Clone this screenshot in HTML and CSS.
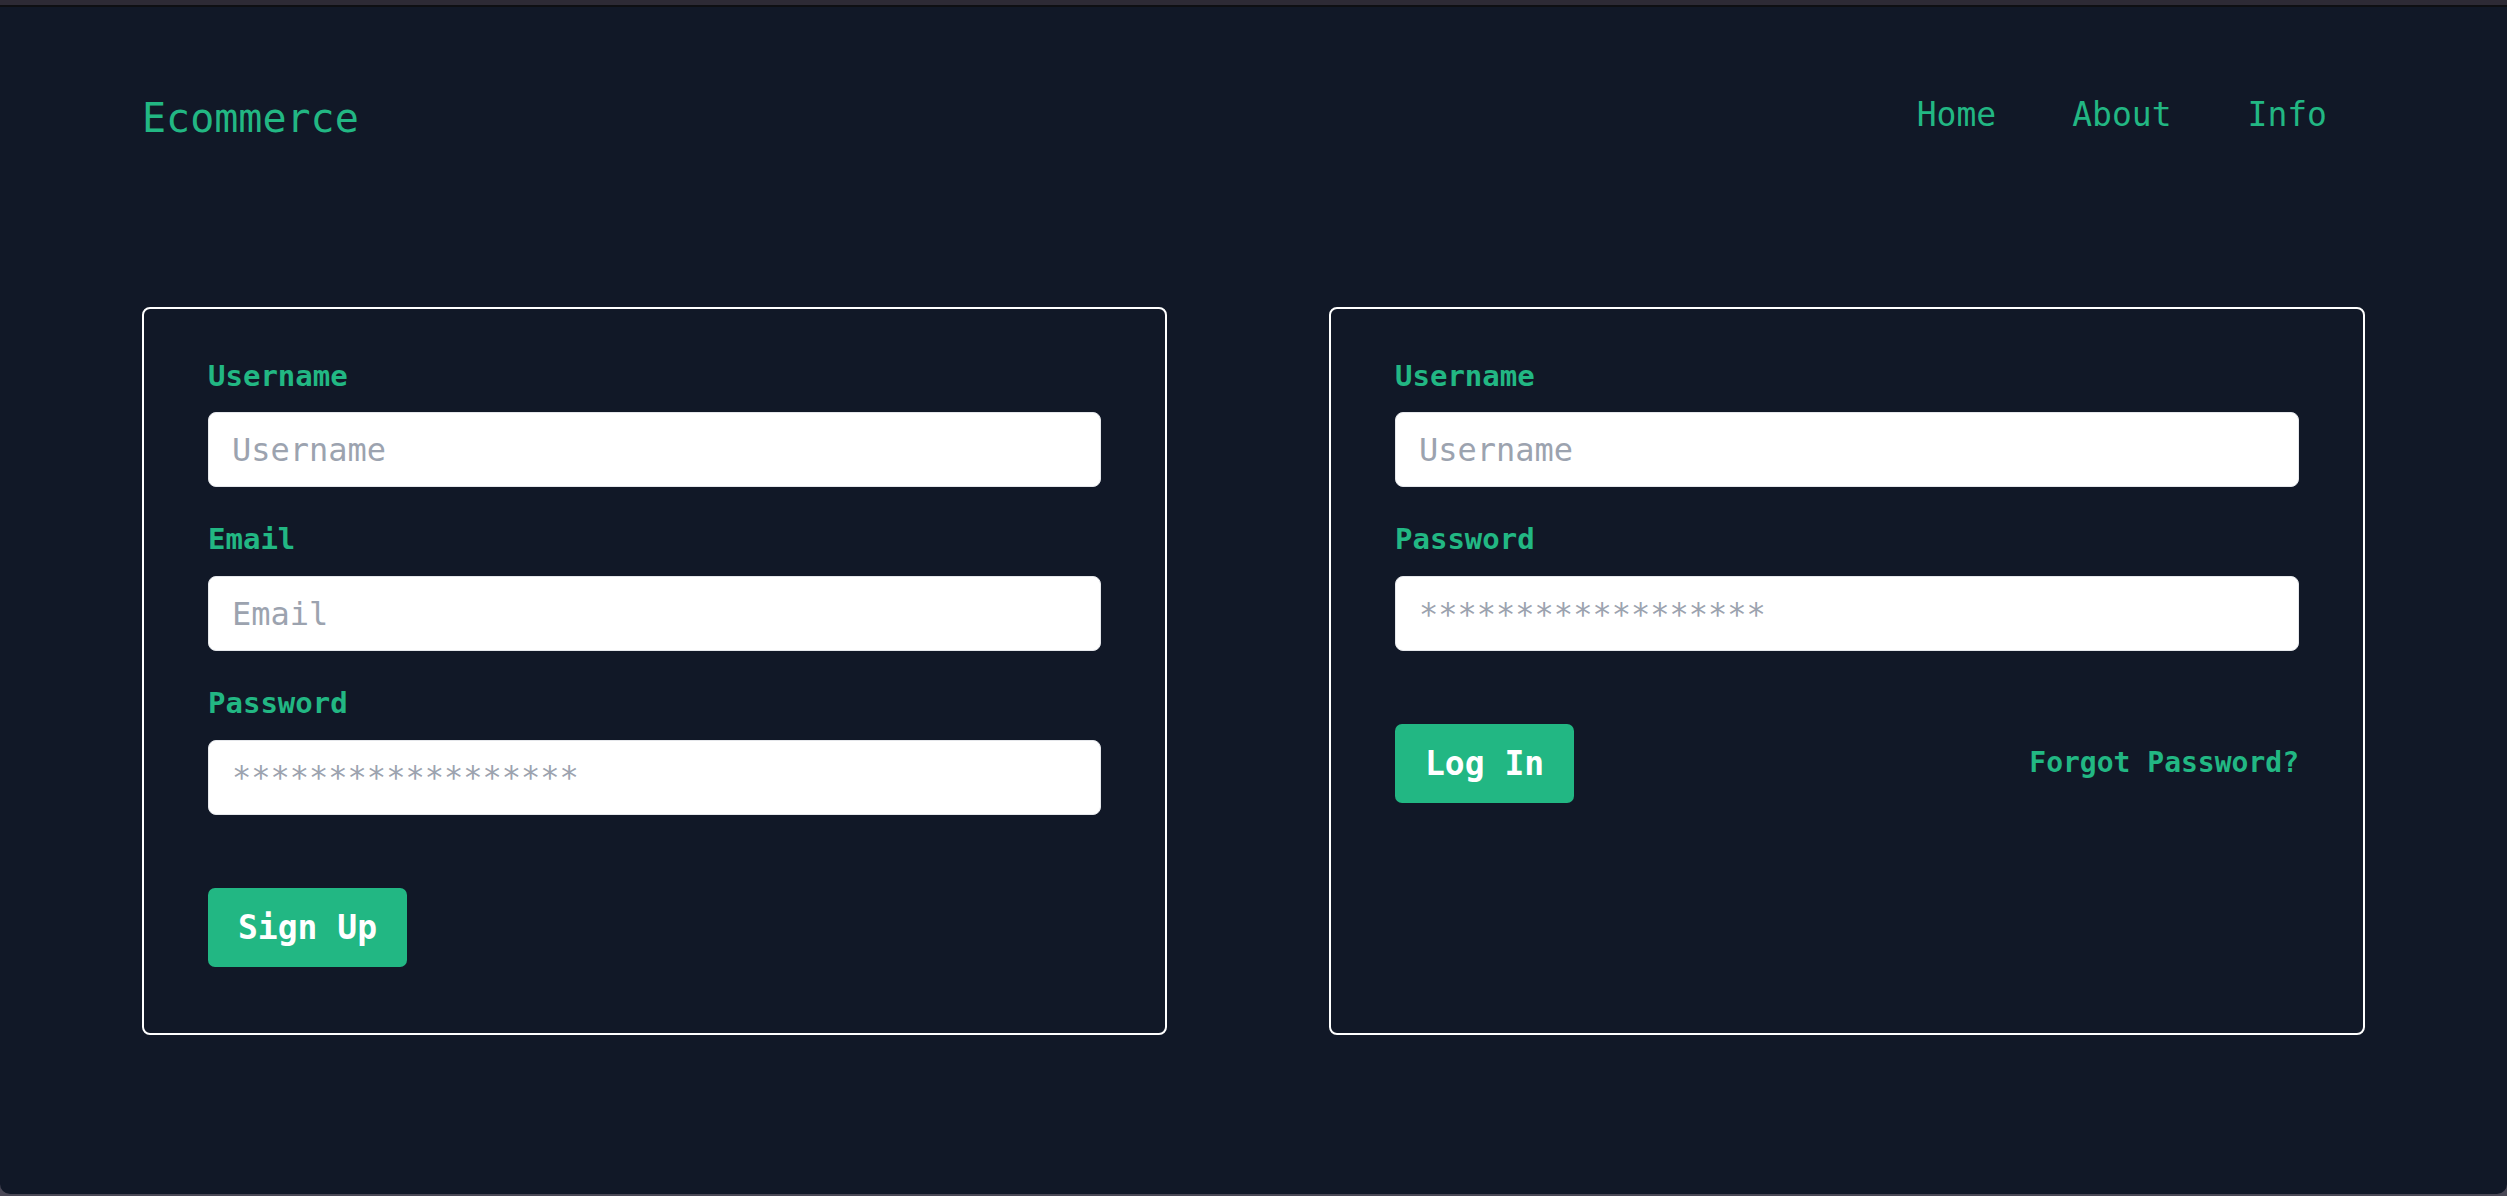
FILE: index.html
```html
<!DOCTYPE html>
<html lang="en">
<head>
<meta charset="utf-8">
<title>Ecommerce</title>
<link rel="stylesheet" href="styles.css">
</head>
<body>
<div class="chrome"></div>
<div class="page">
  <header class="header">
    <a class="logo" href="#">Ecommerce</a>
    <nav class="nav">
      <a href="#">Home</a>
      <a href="#">About</a>
      <a href="#">Info</a>
    </nav>
  </header>
  <main class="cards">
    <form class="card">
      <div class="field">
        <label class="label">Username</label>
        <input class="input" type="text" placeholder="Username">
      </div>
      <div class="field">
        <label class="label">Email</label>
        <input class="input" type="text" placeholder="Email">
      </div>
      <div class="field">
        <label class="label">Password</label>
        <input class="input" type="text" placeholder="******************">
      </div>
      <div class="actions">
        <button class="btn" type="button">Sign Up</button>
      </div>
    </form>
    <form class="card">
      <div class="field">
        <label class="label">Username</label>
        <input class="input" type="text" placeholder="Username">
      </div>
      <div class="field">
        <label class="label">Password</label>
        <input class="input" type="text" placeholder="******************">
      </div>
      <div class="actions actions-split">
        <button class="btn" type="button">Log In</button>
        <a class="forgot" href="#">Forgot Password?</a>
      </div>
    </form>
  </main>
</div>
</body>
</html>
```
FILE: styles.css
```css
* { box-sizing: border-box; }
html, body { margin: 0; padding: 0; }
body {
  background: #4a4856;
  font-family: "DejaVu Sans Mono", monospace;
  height: 1196px;
  overflow: hidden;
}
.chrome {
  height: 7px;
  background: #2d2a35;
  border-bottom: 2px solid #0e0f13;
}
.page {
  height: 1187px;
  background: #111827;
  border-radius: 0 0 10px 10px;
  padding: 88px 142px 0;
}
.header {
  display: flex;
  justify-content: space-between;
  align-items: flex-start;
}
.logo {
  font-size: 40px;
  line-height: 1.164;
  color: #22b783;
  text-decoration: none;
}
.nav {
  display: flex;
  gap: 76px;
  padding-top: 1px;
  padding-right: 38px;
}
.nav a {
  font-size: 33px;
  line-height: 1.164;
  color: #22b783;
  text-decoration: none;
}
.cards {
  margin-top: 165px;
  display: grid;
  grid-template-columns: 1025fr 1036fr;
  column-gap: 162px;
}
.card {
  border: 2px solid #ffffff;
  border-radius: 8px;
  padding: 51px 64px 66px;
  margin: 0;
}
.field {
  display: flex;
  flex-direction: column;
  margin-bottom: 36px;
}
.field:last-of-type { margin-bottom: 0; }
.label {
  font-size: 29px;
  line-height: 1.164;
  font-weight: bold;
  color: #22b783;
  margin-bottom: 19px;
}
.input {
  height: 75px;
  width: 100%;
  border: 1px solid #e5e7eb;
  border-radius: 8px;
  background: #ffffff;
  padding: 0 23px;
  font-family: "DejaVu Sans Mono", monospace;
  font-size: 32px;
  color: #374151;
  outline: none;
}
.input::placeholder { color: #9ca3af; }
.actions {
  margin-top: 73px;
  display: flex;
  align-items: center;
}
.actions-split { justify-content: space-between; }
.btn {
  height: 79px;
  padding: 0 30px;
  border: none;
  border-radius: 7px;
  background: #22b783;
  color: #ffffff;
  font-family: "DejaVu Sans Mono", monospace;
  font-size: 33px;
  font-weight: bold;
  line-height: 79px;
}
.forgot {
  font-size: 28px;
  font-weight: bold;
  color: #22b783;
  text-decoration: none;
  line-height: 1.164;
}
```
